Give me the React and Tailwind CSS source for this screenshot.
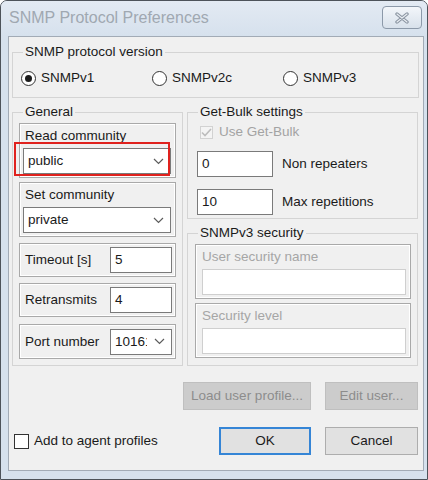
import React from 'react';

// Small down-arrow used by the combo boxes
function Chevron() {
  return (
    <svg width="11" height="7" viewBox="0 0 11 7" fill="none">
      <polyline points="1,1 5.5,5.5 10,1" stroke="#5c5c5c" strokeWidth="1.2" />
    </svg>
  );
}

function Combo({ value, clip }) {
  return (
    <div className="flex items-center h-[26px] border border-[#7a7a7a] bg-white pl-[4px] pr-[6px]">
      <span className={`${clip ? 'w-[32px] flex-none' : 'flex-1'} overflow-hidden whitespace-nowrap leading-[16px]`}>
        {value}
      </span>
      <span className="flex-1" />
      <Chevron />
    </div>
  );
}

function Group({ title, className, children }) {
  return (
    <fieldset className={`border border-[#d4d4d4] ${className}`}>
      <legend className="ml-[10px] px-[2px] leading-[16px]">{title}</legend>
      {children}
    </fieldset>
  );
}

function SubBox({ className, children }) {
  return (
    <div className={`border border-[#a9a9a9] shadow-[inset_0_0_0_1px_#ffffff] ${className}`}>
      {children}
    </div>
  );
}

function Radio({ label, checked }) {
  return (
    <div className="flex items-center w-[131px]">
      <div className="w-[15px] h-[15px] rounded-full border border-[#333333] bg-white flex items-center justify-center">
        {checked && <div className="w-[7px] h-[7px] rounded-full bg-[#1c1c1c]" />}
      </div>
      <span className="ml-[5px] leading-[16px]">{label}</span>
    </div>
  );
}

function Field({ label, value }) {
  return (
    <SubBox className="h-[34px] flex items-center pl-[5px] pr-[3px]">
      <span className="leading-[16px]">{label}</span>
      <div className="ml-auto w-[62px] h-[26px] border border-[#7a7a7a] bg-white pl-[4px] flex items-center">
        {value}
      </div>
    </SubBox>
  );
}

function DisabledField({ label }) {
  return (
    <SubBox className="h-[55px] pt-[4px] pl-[6px] pr-[4px]">
      <div className="leading-[16px] text-[#a6a6a6]">{label}</div>
      <div className="mt-[4px] h-[26px] border border-[#cfcfcf] bg-white" />
    </SubBox>
  );
}

function Button({ children, className }) {
  return (
    <div className={`h-[28px] flex items-center justify-center border ${className}`}>{children}</div>
  );
}

export default function App() {
  return (
    <div className="w-[428px] h-[480px] bg-white">
      <div className="w-[428px] h-[480px] flex flex-col border border-[#4d535a] rounded-t-[7px] bg-[#d6e1ed] text-[13.5px] text-[#1a1a1a] font-['Liberation_Sans',Arial,sans-serif]">
        {/* title bar */}
        <div className="h-[35px] flex items-start justify-between pl-[8px] pr-[5px] rounded-t-[6px] bg-gradient-to-b from-[#e3eaf3] to-[#d6e1ed]">
          <span className="mt-[7px] text-[16px] leading-[20px] text-[#a0a8b1]">SNMP Protocol Preferences</span>
          <div className="mt-[5px] w-[40px] h-[23px] rounded-[4px] border border-[#8c99a9] bg-gradient-to-b from-[#f3f6fa] to-[#d8e1eb] flex items-center justify-center">
            <svg width="16" height="12" viewBox="0 0 16 12">
              <path d="M3 2 L13 10 M13 2 L3 10" stroke="#8a94a1" strokeWidth="3.4" strokeLinecap="round" />
              <path d="M3 2 L13 10 M13 2 L3 10" stroke="#e9eef3" strokeWidth="1.2" strokeLinecap="round" />
            </svg>
          </div>
        </div>

        {/* client area */}
        <div className="flex-1 flex flex-col pl-[7px] pr-[3px] pb-[8px]">
          <div className="flex-1 flex flex-col border border-[#a2abb6] bg-[#f0f0f0] pt-[7px]">
            <div className="pl-[3px]">
              <Group title="SNMP protocol version" className="w-[407px]">
                <div className="flex pl-[8px] pt-[10px] pb-[11px]">
                  <Radio label="SNMPv1" checked />
                  <Radio label="SNMPv2c" />
                  <Radio label="SNMPv3" />
                </div>
              </Group>

              <div className="flex gap-[4px] mt-[6px]">
                {/* General */}
                <Group title="General" className="w-[171px]">
                  <div className="pt-[3px] px-[6px] pb-[6px]">
                    <SubBox className="relative h-[55px] pt-[4px] pl-[3px] pr-[4px]">
                      <div className="pl-[2px] leading-[16px]">Read community</div>
                      <div className="mt-[4px]">
                        <Combo value="public" />
                      </div>
                      <div className="absolute left-[-6px] top-[18px] w-[156px] h-[34px] border-2 border-[#e0221e]" />
                    </SubBox>
                    <SubBox className="mt-[4px] h-[55px] pt-[4px] pl-[3px] pr-[4px]">
                      <div className="pl-[2px] leading-[16px]">Set community</div>
                      <div className="mt-[4px]">
                        <Combo value="private" />
                      </div>
                    </SubBox>
                    <div className="mt-[6px]">
                      <Field label="Timeout [s]" value="5" />
                    </div>
                    <div className="mt-[6px]">
                      <Field label="Retransmits" value="4" />
                    </div>
                    <SubBox className="mt-[7px] h-[35px] flex items-center pl-[5px] pr-[3px]">
                      <span className="leading-[16px]">Port number</span>
                      <div className="ml-auto w-[62px]">
                        <Combo value="10161" clip />
                      </div>
                    </SubBox>
                  </div>
                </Group>

                {/* right column */}
                <div className="w-[231px] flex flex-col">
                  <Group title="Get-Bulk settings" className="w-full">
                    <div className="pt-[4px] pl-[9px] pb-[3px]">
                      <div className="flex items-center h-[16px] ml-[3px]">
                        <div className="w-[13px] h-[13px] border border-[#d2d2d2] bg-[#f4f4f4] flex items-center justify-center">
                          <svg width="11" height="9" viewBox="0 0 11 9" fill="none">
                            <polyline points="1,4.5 4,7.5 10,1" stroke="#bdbdbd" strokeWidth="1.6" />
                          </svg>
                        </div>
                        <span className="ml-[6px] text-[#a3a3a3] leading-[16px]">Use Get-Bulk</span>
                      </div>
                      <div className="flex items-center mt-[11px]">
                        <div className="w-[76px] h-[26px] border border-[#7a7a7a] bg-white pl-[4px] flex items-center">0</div>
                        <span className="ml-[9px]">Non repeaters</span>
                      </div>
                      <div className="flex items-center mt-[12px]">
                        <div className="w-[76px] h-[26px] border border-[#7a7a7a] bg-white pl-[4px] flex items-center">10</div>
                        <span className="ml-[9px]">Max repetitions</span>
                      </div>
                    </div>
                  </Group>

                  <Group title="SNMPv3 security" className="w-full mt-[6px]">
                    <div className="pt-[3px] pl-[7px] pr-[6px] pb-[7px]">
                      <DisabledField label="User security name" />
                      <div className="mt-[4px]">
                        <DisabledField label="Security level" />
                      </div>
                    </div>
                  </Group>
                </div>
              </div>
            </div>

            {/* buttons */}
            <div className="flex justify-end gap-[14px] pr-[5px] mt-[16px]">
              <Button className="w-[128px] bg-[#cccccc] border-[#bfbfbf] text-[#8c8c8c]">Load user profile...</Button>
              <Button className="w-[93px] bg-[#cccccc] border-[#bfbfbf] text-[#8c8c8c]">Edit user...</Button>
            </div>
            <div className="flex items-center px-[5px] mt-[17px]">
              <div className="w-[15px] h-[15px] border border-[#333333] bg-white" />
              <span className="ml-[5px] leading-[16px]">Add to agent profiles</span>
              <Button className="ml-auto w-[92px] bg-[#e1e1e1] border-2 border-[#3585d6]">OK</Button>
              <Button className="ml-[14px] w-[93px] bg-[#e1e1e1] border-[#adadad]">Cancel</Button>
            </div>
          </div>
        </div>
      </div>
    </div>
  );
}
